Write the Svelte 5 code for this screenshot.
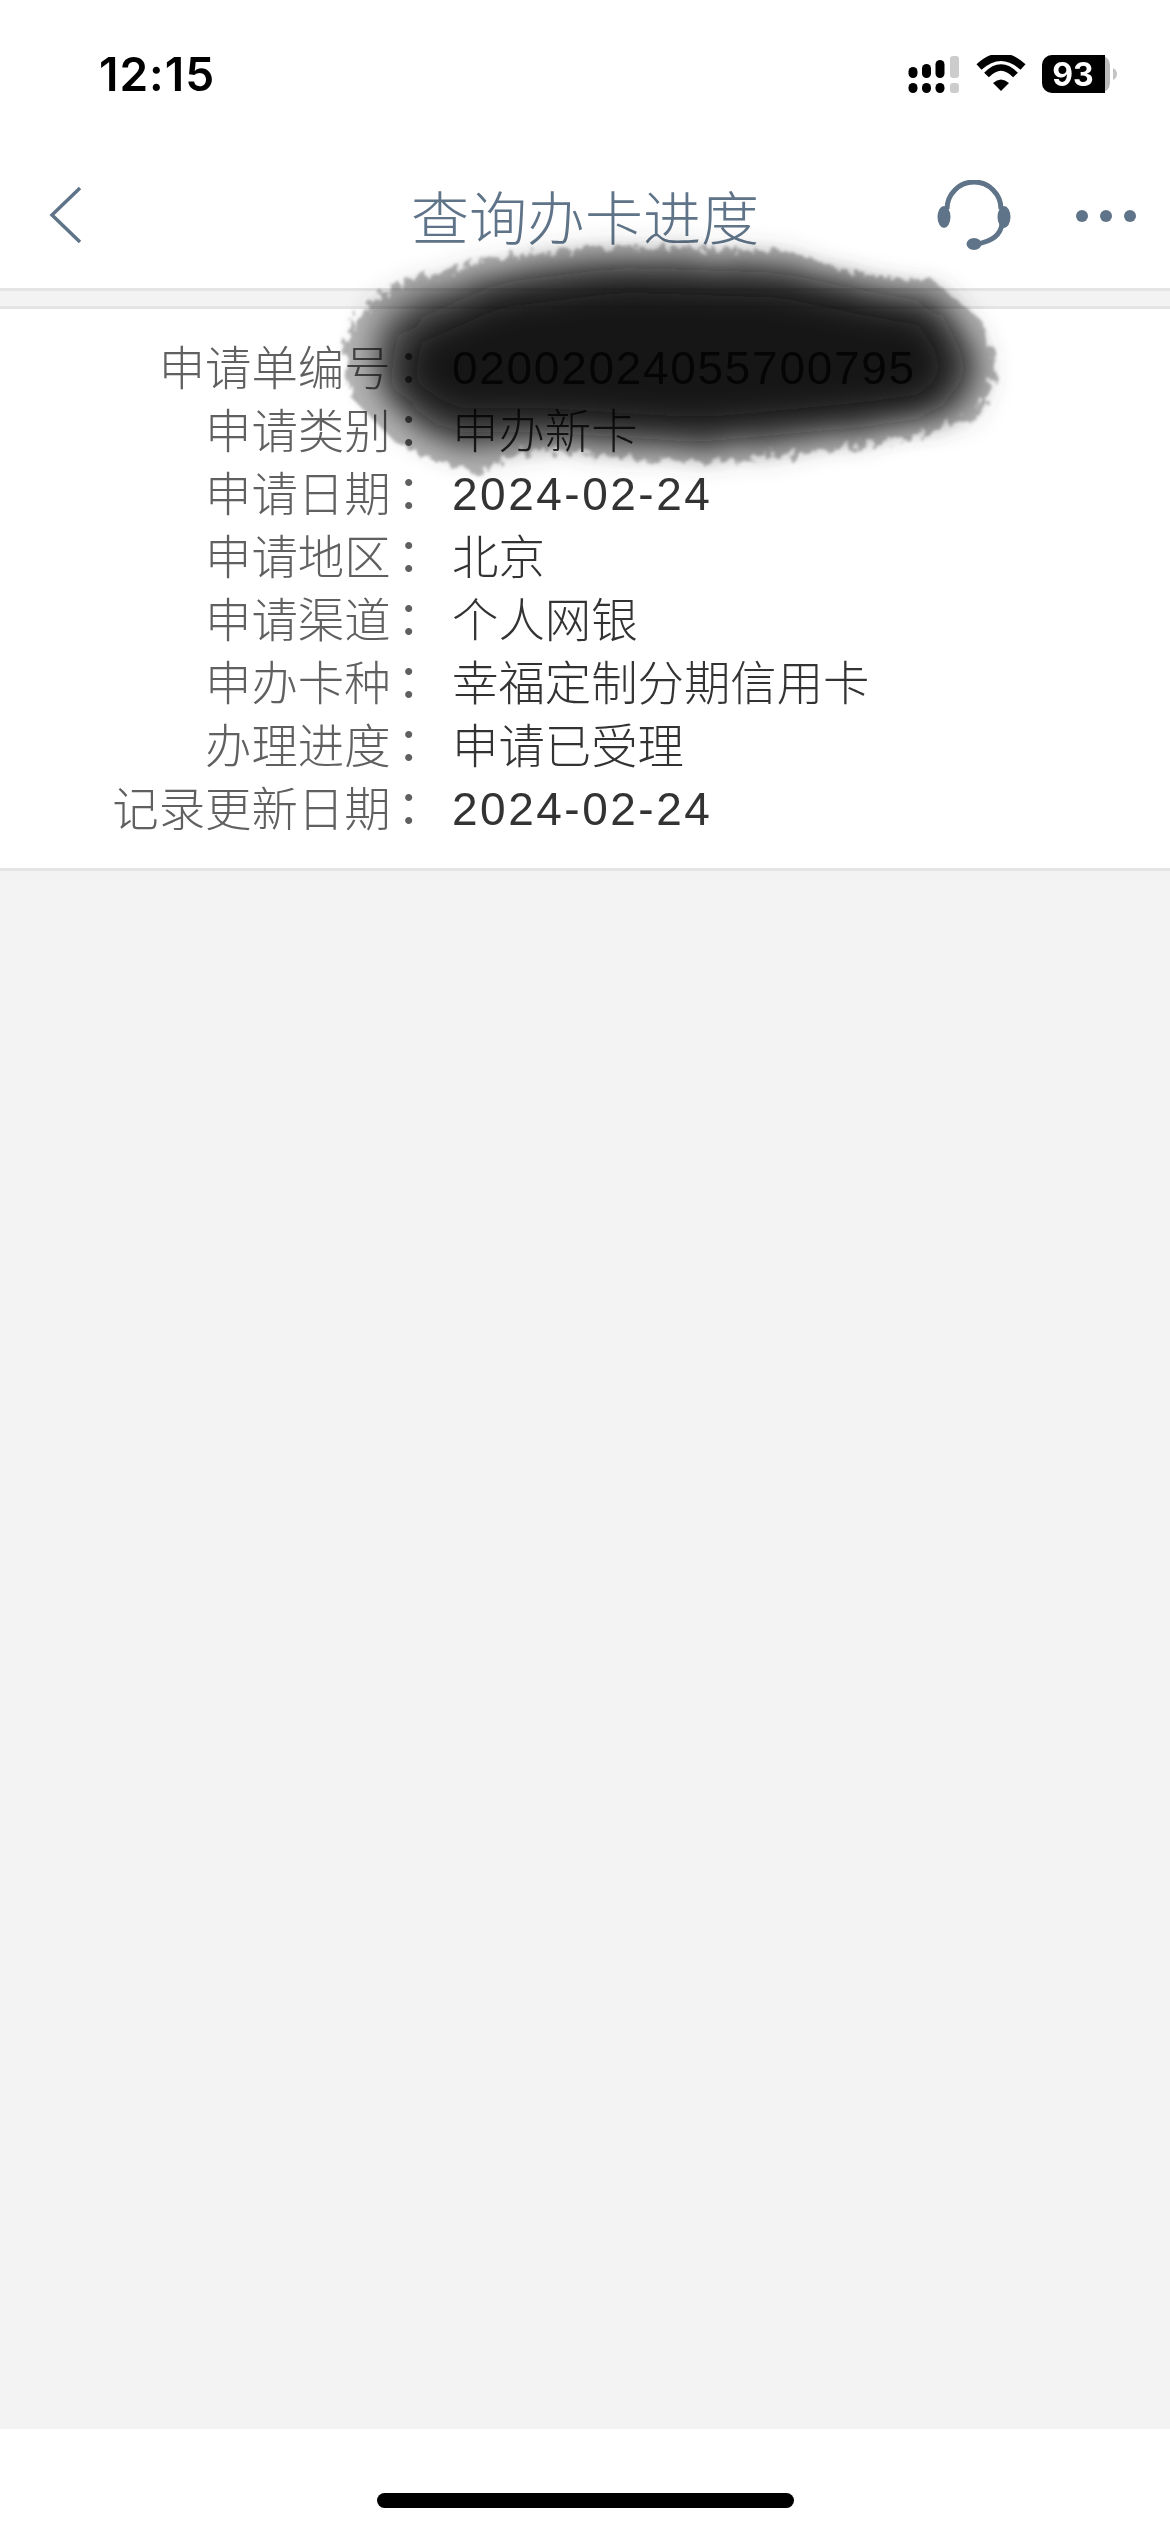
<script>
  const rows = [
    { label: "申请单编号", value: "02002024055700795", num: true },
    { label: "申请类别", value: "申办新卡" },
    { label: "申请日期", value: "2024-02-24", date: true },
    { label: "申请地区", value: "北京" },
    { label: "申请渠道", value: "个人网银" },
    { label: "申办卡种", value: "幸福定制分期信用卡" },
    { label: "办理进度", value: "申请已受理" },
    { label: "记录更新日期", value: "2024-02-24", date: true }
  ];

  const blot =
    "M342 343 L360 313 L396 282 L490 260 L597 247 L784 250 L856 273 L936 283 L981 320 L999 370 L976 417 L900 440 L766 457 L686 463 L530 450 L476 472 L432 460 L396 443 L351 397 Z";
</script>

<div class="page">
  <div class="status">
    <span class="time">12:15</span>
    <div class="status-icons">
      <svg width="52" height="38" viewBox="907 55 52 38">
        <g fill="#000">
          <rect x="907.5" y="67" width="9" height="11" rx="4.5" />
          <rect x="921" y="64" width="9" height="14" rx="4.5" />
          <rect x="934.5" y="60" width="9" height="18" rx="4.5" />
          <rect x="907.5" y="83" width="9" height="10" rx="4.5" />
          <rect x="921" y="83" width="9" height="10" rx="4.5" />
          <rect x="934.5" y="83" width="9" height="10" rx="4.5" />
        </g>
        <rect x="949" y="56" width="9" height="22" rx="3" fill="#ccc" />
        <rect x="949" y="83" width="9" height="10" rx="3" fill="#ccc" />
      </svg>
      <svg width="50" height="38" viewBox="974 55 50 38">
        <path d="M977 67 Q999 47 1021 67" fill="none" stroke="#000" stroke-width="7.5" />
        <path d="M984.5 75 Q999 60 1013.5 75" fill="none" stroke="#000" stroke-width="6.5" />
        <path d="M991 83 Q999 76 1007 83 L999 91 Z" fill="#000" />
      </svg>
      <svg width="76" height="38" viewBox="1040 55 76 38">
        <rect x="1040" y="55" width="68" height="38" rx="10" fill="#bbb" />
        <path d="M1050 55 H1103 V93 H1050 A10 10 0 0 1 1040 83 V65 A10 10 0 0 1 1050 55 Z" fill="#000" />
        <path d="M1111 68 Q1115 70 1115 74 Q1115 78 1111 80 Z" fill="#c4c4c4" />
        <text x="1071" y="86" text-anchor="middle" class="batt">93</text>
      </svg>
    </div>
  </div>

  <div class="nav">
    <svg class="back" width="34" height="58" viewBox="0 0 34 58">
      <path d="M31 2 L3 29 L31 56" fill="none" stroke="#5f7488" stroke-width="3.5" />
    </svg>
    <span class="title">查询办卡进度</span>
    <div class="nav-right">
      <svg width="74" height="72" viewBox="935 180 74 72">
        <g fill="#5f7488">
          <ellipse cx="942" cy="217" rx="6.5" ry="11" />
          <ellipse cx="1002" cy="217" rx="6.5" ry="11" />
          <ellipse cx="972" cy="244" rx="7.5" ry="6" />
        </g>
        <path d="M945 209 A26.500 26.500 0 0 1 999 209 M1000 224 Q998 240 975 244" fill="none" stroke="#5f7488" stroke-width="5" />
      </svg>
      <div class="dots"><i></i><i></i><i></i></div>
    </div>
  </div>

  <div class="strip"></div>

  <div class="card">
    {#each rows as row}
      <div class="row">
        <span class="label">{row.label}<b>：</b></span>
        <span class="value" class:num={row.num} class:date={row.date}>{row.value}</span>
      </div>
    {/each}
  </div>

  <div class="fill"></div>

  <div class="foot"><div class="home"></div></div>

  <!-- ink smear painted over the screenshot -->
  <svg class="blot" width="1170" height="520" viewBox="0 0 1170 520">
    <defs>
      <filter id="rough" x="-10%" y="-20%" width="120%" height="140%">
        <feTurbulence type="fractalNoise" baseFrequency="0.12 0.09" numOctaves="5" seed="4" result="n" />
        <feDisplacementMap in="SourceGraphic" in2="n" scale="24" />
        <feGaussianBlur stdDeviation="1.5" />
      </filter>
      <filter id="soft" x="-20%" y="-40%" width="140%" height="180%">
        <feTurbulence type="fractalNoise" baseFrequency="0.1 0.05" numOctaves="4" seed="9" result="n" />
        <feDisplacementMap in="SourceGraphic" in2="n" scale="40" />
        <feGaussianBlur stdDeviation="15" />
      </filter>
      <filter id="inner" x="-20%" y="-40%" width="140%" height="180%">
        <feGaussianBlur stdDeviation="18" />
      </filter>
    </defs>
    <path d={blot} fill="#b4b4b4" filter="url(#rough)" />
    <path d="M372 345 L405 300 L500 275 L610 258 L780 265 L860 288 L935 298 L970 340 L982 375 L955 408 L880 428 L700 448 L540 436 L470 452 L420 430 L380 390 Z" fill="#4c4c4c" filter="url(#soft)" />
    <path d="M410 335 L500 295 L620 280 L780 285 L860 302 L930 315 L958 370 L930 405 L860 415 L700 430 L540 420 L450 420 L400 385 Z" fill="#121212" filter="url(#inner)" />
  </svg>
</div>

<style>
  :global(body) {
    margin: 0;
  }

  .page {
    position: relative;
    width: 1170px;
    height: 2532px;
    display: flex;
    flex-direction: column;
    background: #fff;
    font-family: "Liberation Sans", "Noto Sans CJK SC", sans-serif;
    overflow: hidden;
  }

  .status {
    height: 148px;
    flex: none;
    display: flex;
    align-items: center;
    justify-content: space-between;
    padding: 0 52px 0 99px;
  }

  .time {
    font-family: Inter, sans-serif;
    font-weight: 600;
    font-size: 46px;
    letter-spacing: 1px;
    color: #000;
  }

  .status-icons {
    display: flex;
    align-items: center;
    gap: 16px;
  }

  .status-icons svg,
  .nav svg {
    display: block;
  }

  .batt {
    font-family: Inter, sans-serif;
    font-weight: 700;
    font-size: 32px;
    fill: #fff;
  }

  .nav {
    position: relative;
    height: 140px;
    flex: none;
    display: flex;
    align-items: center;
    justify-content: center;
  }

  .back {
    position: absolute;
    left: 49px;
    top: 38px;
  }

  .title {
    font-family: "Noto Sans CJK SC", sans-serif;
    font-weight: 300;
    font-size: 58px;
    color: #5f7488;
    margin-bottom: 6px;
  }

  .nav-right {
    position: absolute;
    right: 34px;
    top: 32px;
    display: flex;
    align-items: center;
    gap: 65px;
  }

  .dots {
    display: flex;
    gap: 12px;
  }

  .dots i {
    width: 12px;
    height: 12px;
    border-radius: 50%;
    background: #5f7488;
  }

  .strip {
    height: 15px;
    flex: none;
    background: #f3f3f3;
    border-top: 3px solid #e4e4e4;
    border-bottom: 3px solid #e4e4e4;
  }

  .card {
    flex: none;
    padding: 28px 0 27px;
    border-bottom: 3px solid #e4e4e4;
  }

  .row {
    height: 63px;
    display: grid;
    grid-template-columns: 437px 1fr;
    grid-template-rows: 63px;
    column-gap: 15px;
    align-items: center;
    font-size: 46.4px;
    font-weight: 300;
    line-height: 1;
  }

  .label {
    text-align: right;
    color: #606060;
    font-family: "Noto Sans CJK SC", sans-serif;
    margin-bottom: 6px;
  }

  .label b {
    font-weight: 400;
    font-family: "Noto Sans CJK TC", sans-serif;
    position: relative;
    left: -5px;
  }

  .value {
    color: #333;
    font-family: "Noto Sans CJK SC", sans-serif;
    margin-bottom: 6px;
  }

  .value.num,
  .value.date {
    font-family: "Liberation Sans", sans-serif;
    font-size: 46px;
    margin-bottom: 2px;
  }

  .value.num {
    letter-spacing: 1.7px;
  }

  .value.date {
    letter-spacing: 2.5px;
  }

  .fill {
    flex: 1;
    background: #f3f3f3;
  }

  .foot {
    height: 103px;
    flex: none;
    padding-top: 64px;
    box-sizing: border-box;
  }

  .home {
    width: 417px;
    height: 15px;
    margin-left: 377px;
    border-radius: 8px;
    background: #000;
  }

  .blot {
    position: absolute;
    left: 0;
    top: 0;
    pointer-events: none;
    mix-blend-mode: multiply;
  }
</style>
